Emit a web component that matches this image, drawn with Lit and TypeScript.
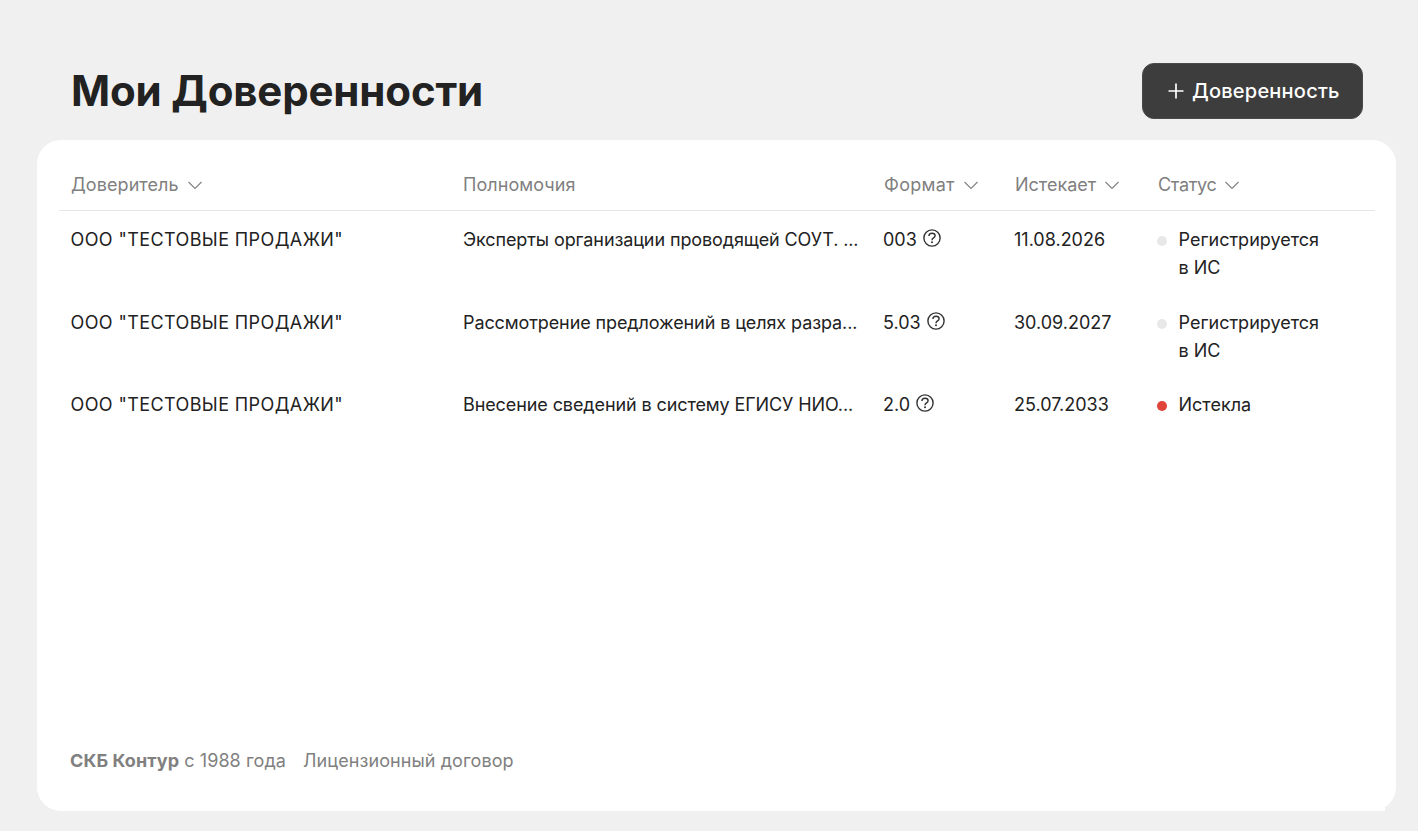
import { LitElement, html, css, svg } from "lit";
import { customElement } from "lit/decorators.js";

const chevron = html`<svg class="chev" width="16" height="16" viewBox="0 0 16 16" fill="none"><path d="M1.5 5l6.5 6.5L14.5 5" stroke="currentColor" stroke-width="1.1"/></svg>`;
const plus = html`<svg width="16" height="16" viewBox="0 0 16 16" fill="none"><path d="M8 .5v15M.5 8h15" stroke="#fff" stroke-width="1.7"/></svg>`;
const help = html`<svg class="help" width="18" height="18" viewBox="0 0 18 18" fill="none">
  <circle cx="9" cy="9" r="8.1" stroke="#333" stroke-width="1.4"/>
  ${svg`<path d="M5.9 7.1c0-1.8 1.3-2.9 3.1-2.9s3.1 1 3.1 2.6c0 2.2-3.1 2.1-3.1 4.4" stroke="#333" stroke-width="1.4"/>`}
  <circle cx="9" cy="13.3" r="1" fill="#333"/>
</svg>`;

const rows = [
  { org: 'ООО "ТЕСТОВЫЕ ПРОДАЖИ"', pow: "Эксперты организации проводящей СОУТ. ...", fmt: "003", date: "11.08.2026", status: ["Регистрируется", "в ИС"], bad: false },
  { org: 'ООО "ТЕСТОВЫЕ ПРОДАЖИ"', pow: "Рассмотрение предложений в целях разра...", fmt: "5.03", date: "30.09.2027", status: ["Регистрируется", "в ИС"], bad: false },
  { org: 'ООО "ТЕСТОВЫЕ ПРОДАЖИ"', pow: "Внесение сведений в систему ЕГИСУ НИО...", fmt: "2.0", date: "25.07.2033", status: ["Истекла"], bad: true },
];

@customElement("app-root")
export class AppRoot extends LitElement {
  static styles = css`
    :host { display: block; height: 831px; background: #f0f0f0; font-family: Inter, "Noto Sans", sans-serif; color: #222; overflow: hidden; }
    .head { display: flex; justify-content: space-between; align-items: center; height: 140px; padding: 0 55px 0 71px; box-sizing: border-box; }
    .head > h1 { margin: 0; font-size: 42px; line-height: 56px; font-weight: 700; letter-spacing: -0.16px; padding-top: 42px; color: #222; }
    .btn { margin-top: 42px; height: 56px; width: 221px; box-sizing: border-box; border-radius: 12px; background: #3d3d3d; border: 1px solid #4a4a4a; color: #fff; display: flex; align-items: center; gap: 8px; font-size: 20px; font-weight: 500; letter-spacing: 0.22px; padding-left: 25px; }
    .card { margin-left: 37px; width: 1359px; height: 671px; background: #fff; border-radius: 24px; padding: 22px 21px 0 22px; box-sizing: border-box; position: relative; }
    .card::after { content: ""; position: absolute; right: 11px; bottom: 0; width: 24px; height: 24px; background: #fff; }
    .grid { display: grid; grid-template-columns: 392px 420px 131px 143px 1fr; }
    .th { height: 49px; box-sizing: border-box; border-bottom: 1px solid #e6e6e6; padding: 1px 12px 0 13px; display: flex; align-items: flex-start; gap: 8px; color: #808080; font-size: 18px; line-height: 44px; }
    .th.a { padding-left: 12px; letter-spacing: 0.08px; }
    .th.w { letter-spacing: 0.28px; }
    .th.n { letter-spacing: -0.32px; }
    .chev { margin-top: 14px; flex: none; }
    .td { padding: 15px 12px 11.7px; font-size: 18px; line-height: 28px; min-width: 0; box-sizing: border-box; white-space: nowrap; }
    .org { letter-spacing: 0.4px; padding-left: 11.5px; }
    .pow { letter-spacing: -0.1px; }
    .fmt { display: flex; gap: 6px; align-items: flex-start; }
    .help { margin-top: 3px; flex: none; }
    .status { display: flex; gap: 11.5px; }
    .status span span { display: block; }
    .dot { flex: none; width: 10px; height: 10px; border-radius: 50%; background: #e8e8e8; margin-top: 10px; }
    .dot.bad { background: #e0433a; }
    .foot { position: absolute; left: 33px; top: 606px; font-size: 18px; line-height: 30px; color: #808080; display: flex; gap: 17px; letter-spacing: 0.08px; }
    b { font-weight: 700; }
  `;
  render() {
    return html`
      <div class="head"><h1>Мои Доверенности</h1><div class="btn">${plus}<span>Доверенность</span></div></div>
      <div class="card">
        <div class="grid">
          <div class="th a">Доверитель ${chevron}</div>
          <div class="th a">Полномочия</div>
          <div class="th w">Формат ${chevron}</div>
          <div class="th">Истекает ${chevron}</div>
          <div class="th n">Статус ${chevron}</div>
          ${rows.map(r => html`
            <div class="td org">${r.org}</div>
            <div class="td pow">${r.pow}</div>
            <div class="td"><div class="fmt"><span>${r.fmt}</span>${help}</div></div>
            <div class="td">${r.date}</div>
            <div class="td"><div class="status"><span class="dot ${r.bad ? "bad" : ""}"></span><span>${r.status.map(s => html`<span>${s}</span>`)}</span></div></div>
          `)}
        </div>
        <div class="foot"><span><b>СКБ Контур</b> с 1988 года</span><span>Лицензионный договор</span></div>
      </div>
    `;
  }
}
